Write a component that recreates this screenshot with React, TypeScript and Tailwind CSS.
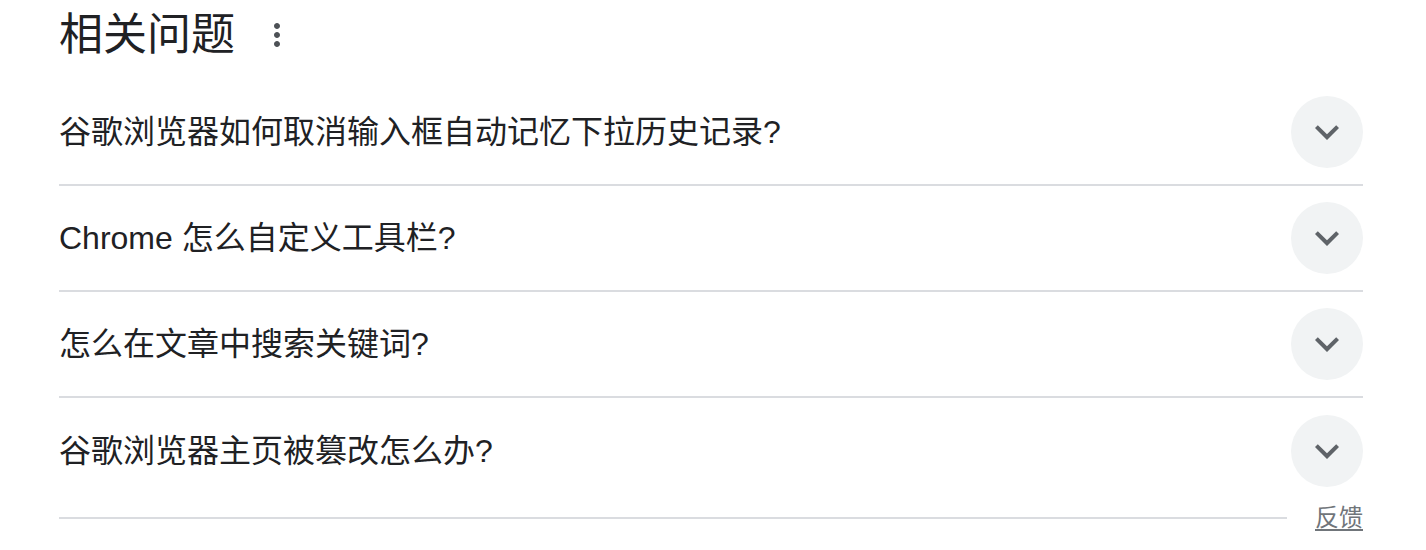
const questions = [
  '谷歌浏览器如何取消输入框自动记忆下拉历史记录?',
  'Chrome 怎么自定义工具栏?',
  '怎么在文章中搜索关键词?',
  '谷歌浏览器主页被篡改怎么办?',
]

function ExpandIcon() {
  return (
    <svg viewBox="0 0 24 24" className="w-12 h-12 fill-[#5f6368]">
      <path d="M16.59 8.59L12 13.17 7.41 8.59 6 10l6 6 6-6z" />
    </svg>
  )
}

function MoreIcon() {
  return (
    <svg viewBox="0 0 24 24" className="w-9 h-9 fill-[#4d5156]">
      <path d="M12 8c1.1 0 2-.9 2-2s-.9-2-2-2-2 .9-2 2 .9 2 2 2zm0 2c-1.1 0-2 .9-2 2s.9 2 2 2 2-.9 2-2-.9-2-2-2zm0 6c-1.1 0-2 .9-2 2s.9 2 2 2 2-.9 2-2-.9-2-2-2z" />
    </svg>
  )
}

export default function App() {
  return (
    <div
      className="bg-white w-[1426px] h-[550px] overflow-hidden pl-[59px] pr-[63px] text-[#202124]"
      style={{ fontFamily: '"Liberation Sans", Arial, "Noto Sans CJK SC", sans-serif' }}
    >
      {/* Header */}
      <div className="flex items-center h-[80px] pb-[10px]">
        <h2 className="text-[44px] leading-[56px] font-normal">相关问题</h2>
        <button className="ml-[24px] flex items-center">
          <MoreIcon />
        </button>
      </div>

      {/* Questions */}
      <div>
        {questions.map((q, i) => (
          <div
            key={i}
            className={`flex items-center h-[106px] ${i < questions.length - 1 ? 'border-b-2 border-[#dadce0]' : ''}`}
          >
            <div className="flex-1 min-w-0 text-[32px] leading-[40px] truncate">{q}</div>
            <div className="flex-shrink-0 w-[72px] h-[72px] rounded-full bg-[#f1f3f4] flex items-center justify-center">
              <ExpandIcon />
            </div>
          </div>
        ))}
      </div>

      {/* Footer */}
      <div className="flex items-center -mt-[2px]">
        <div className="flex-1 h-[2px] bg-[#dadce0]" />
        <a className="ml-[28px] text-[24px] leading-[32px] text-[#70757a] underline underline-offset-[3px]">反馈</a>
      </div>
    </div>
  )
}
